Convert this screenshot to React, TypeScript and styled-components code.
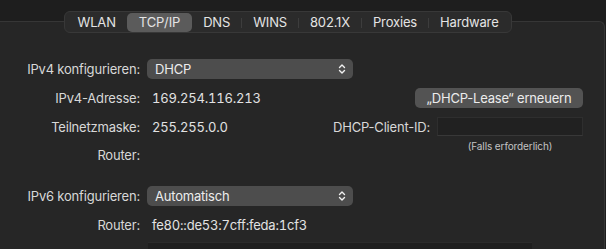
import styled, { createGlobalStyle } from "styled-components";

const GlobalStyle = createGlobalStyle`
    body {
        margin: 0;
        background-color: #1e1e1e;
        font-family: Inter, "Noto Sans", "Liberation Sans", sans-serif;
        -webkit-font-smoothing: antialiased;
    }
`;

const StyledPage = styled.div`
    height: 249px;
    overflow: hidden;
    padding-top: 11px;
    box-sizing: border-box;
    background-color: #1e1e1e;
`;

const StyledTabBar = styled.div`
    position: relative;
    z-index: 1;
    display: inline-flex;
    align-items: center;
    margin-left: 64px;
    padding: 1px;
    height: 22px;
    box-sizing: border-box;
    background-color: #2b2b2b;
    border: 1px solid #383838;
    border-radius: 6px;
`;

const StyledTab = styled.div<{ $active?: boolean; $divider?: boolean }>`
    position: relative;
    height: 19px;
    padding: 0 11.5px;
    display: flex;
    align-items: center;
    font-size: 13px;
    letter-spacing: -0.16px;
    color: #e4e4e4;
    border-radius: 5px;
    background-color: ${(p) => (p.$active ? "#5b5b5b" : "transparent")};
    &::before {
        content: "";
        display: ${(p) => (p.$divider ? "block" : "none")};
        position: absolute;
        left: -0.5px;
        top: 5px;
        height: 10px;
        width: 1px;
        background-color: #3d3d3d;
    }
`;

const StyledPanel = styled.div`
    margin-top: -12px;
    margin-right: 1px;
    padding: 32px 21px 0 0;
    height: 260px;
    background-color: #262626;
    border-top: 1px solid #363636;
    border-right: 1px solid #363636;
    border-top-right-radius: 6px;
`;

const StyledSection = styled.div<{ $gap?: number }>`
    display: grid;
    grid-template-columns: 140px 206px minmax(0, 1fr) 146px;
    grid-auto-rows: 29px;
    column-gap: 7px;
    align-items: center;
    margin-top: ${(p) => p.$gap ?? 0}px;
`;

const StyledLabel = styled.span<{ $row?: number }>`
    grid-column: 1;
    grid-row: ${(p) => p.$row ?? "auto"};
    justify-self: end;
    white-space: nowrap;
    font-size: 13px;
    letter-spacing: -0.2px;
    color: #d8d8d8;
`;

const StyledSideLabel = styled(StyledLabel)`
    grid-column: 2 / 4;
`;

const StyledValue = styled.span<{ $row?: number }>`
    grid-column: 2;
    grid-row: ${(p) => p.$row ?? "auto"};
    padding-left: 5px;
    white-space: nowrap;
    font-size: 13px;
    font-variant-numeric: tabular-nums;
    letter-spacing: -0.2px;
    color: #e2e2e2;
`;

const StyledSelect = styled.div`
    grid-column: 2;
    width: 206px;
    height: 20px;
    box-sizing: border-box;
    display: flex;
    align-items: center;
    justify-content: space-between;
    padding: 0 7px 0 8px;
    border-radius: 5px;
    background-color: #4d4d4d;
    font-size: 13px;
    letter-spacing: -0.2px;
    color: #ececec;
`;

const StyledButton = styled.div`
    grid-column: 3 / 5;
    grid-row: 2;
    justify-self: end;
    width: 168px;
    height: 20px;
    display: flex;
    align-items: center;
    justify-content: center;
    border-radius: 5px;
    background-color: #535353;
    font-size: 13px;
    letter-spacing: -0.2px;
    color: #ececec;
`;

const StyledInput = styled.div`
    grid-column: 4;
    grid-row: 3;
    height: 19px;
    box-sizing: border-box;
    background-color: #212121;
    border: 1px solid #2e2e2e;
    border-bottom-color: #383838;
`;

const StyledHint = styled.span`
    grid-column: 4;
    grid-row: 4;
    align-self: start;
    justify-self: center;
    margin-top: -1px;
    font-size: 10px;
    letter-spacing: -0.1px;
    color: #c4c4c4;
`;

const StyledTable = styled.div`
    margin: 3px 51px 0 148px;
    height: 40px;
    background-color: #1f1f1f;
    border-top: 1px solid #2b2b2b;
`;

function Chevrons() {
    return (
        <svg width="8" height="12" viewBox="0 0 8 12" fill="none">
            <path
                d="M1.5 4.6 L4 2.1 L6.5 4.6 M1.5 7.4 L4 9.9 L6.5 7.4"
                stroke="#f0f0f0"
                strokeWidth="1.4"
                strokeLinecap="round"
                strokeLinejoin="round"
            />
        </svg>
    );
}

const tabs = ["WLAN", "TCP/IP", "DNS", "WINS", "802.1X", "Proxies", "Hardware"];
const activeTab = 1;

export default function App() {
    return (
        <StyledPage>
            <GlobalStyle />
            <StyledTabBar>
                {tabs.map((t, i) => (
                    <StyledTab
                        key={t}
                        $active={i === activeTab}
                        $divider={i > 0 && i !== activeTab && i - 1 !== activeTab}
                    >
                        {t}
                    </StyledTab>
                ))}
            </StyledTabBar>
            <StyledPanel>
                <StyledSection>
                    <StyledLabel $row={1}>IPv4 konfigurieren:</StyledLabel>
                    <StyledSelect>
                        DHCP
                        <Chevrons />
                    </StyledSelect>

                    <StyledLabel $row={2}>IPv4-Adresse:</StyledLabel>
                    <StyledValue $row={2}>169.254.116.213</StyledValue>
                    <StyledButton>„DHCP-Lease“ erneuern</StyledButton>

                    <StyledLabel $row={3}>Teilnetzmaske:</StyledLabel>
                    <StyledValue $row={3}>255.255.0.0</StyledValue>
                    <StyledSideLabel $row={3}>DHCP-Client-ID:</StyledSideLabel>
                    <StyledInput />

                    <StyledLabel $row={4} style={{ marginTop: -1 }}>
                        Router:
                    </StyledLabel>
                    <StyledHint>(Falls erforderlich)</StyledHint>
                </StyledSection>
                <StyledSection $gap={11}>
                    <StyledLabel $row={1}>IPv6 konfigurieren:</StyledLabel>
                    <StyledSelect>
                        Automatisch
                        <Chevrons />
                    </StyledSelect>

                    <StyledLabel $row={2}>Router:</StyledLabel>
                    <StyledValue $row={2}>fe80::de53:7cff:feda:1cf3</StyledValue>
                </StyledSection>
                <StyledTable />
            </StyledPanel>
        </StyledPage>
    );
}
